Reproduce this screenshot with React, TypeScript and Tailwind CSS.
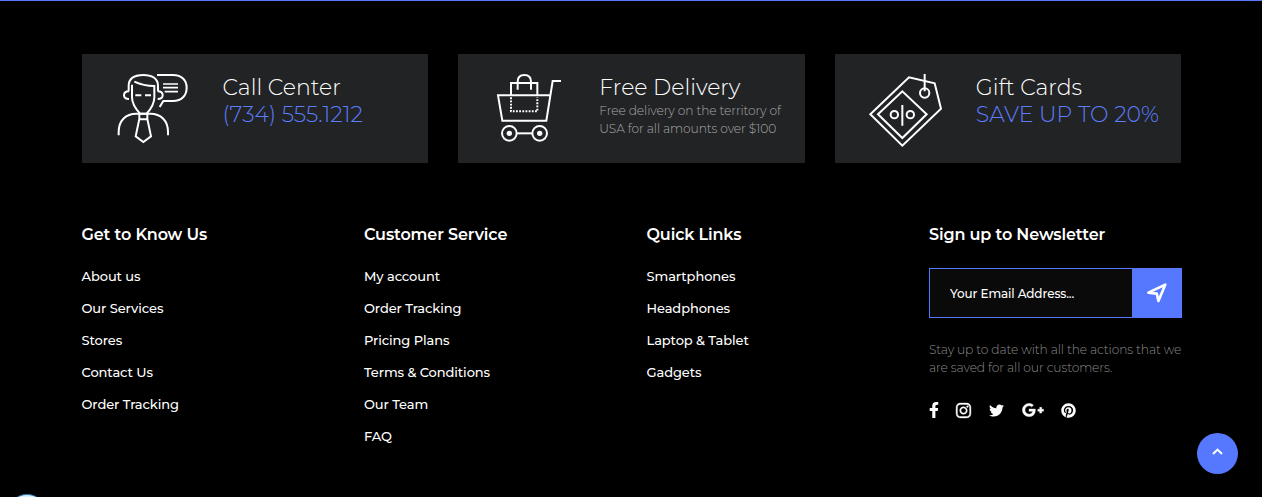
import type { ReactNode } from "react";
import { FaFacebookF, FaInstagram, FaTwitter, FaGooglePlusG, FaPinterest } from "react-icons/fa";

function AgentIcon() {
  return (
    <svg className="ml-[34.5px] h-[73px] w-[74px]" viewBox="108 66 222 219" fill="none" stroke="#fff" strokeWidth="6">
      <path d="M146 124V108C146 84 165 75 190 75S234 85 234 108V124" />
      <path d="M156 104V142C156 162 168 178 180 191H200C212 178 223 162 223 142V108C203 108 182 104 163 95" />
      <path d="M147 124C136 124 132 130 132 136S137 147 147 147M233 124C244 124 248 130 248 136S243 147 233 147" />
      <path d="M166 136H184M195 136H213" />
      <path d="M231 75H278C307 75 320 92 320 113S307 153 278 153H250L239 171" />
      <path d="M249 102H294M249 113H294M254 125H294" strokeWidth="5" />
      <path d="M116 256V246C116 211 138 191 169 191H211C242 191 264 211 264 246V256" />
      <path d="M178 191V207L167 259L190 276L213 259L202 207V191M178 208H202" />
    </svg>
  );
}

function CartIcon() {
  return (
    <svg className="ml-[36.8px] h-[71px] w-[68px]" viewBox="120 66 204 213" fill="none" stroke="#fff" strokeWidth="6">
      <path d="M318 93H293L274 212H142L129 136H287" />
      <path d="M168 136V99H247V136" />
      <path d="M188 119V95C188 81 196 75 208 75S228 81 228 95V119" />
      <path d="M168 142V184H247V142" strokeDasharray="5.5 4" />
      <circle cx="163" cy="250" r="22" />
      <circle cx="254" cy="250" r="22" />
      <circle cx="163" cy="250" r="8" fill="#fff" stroke="none" />
      <circle cx="254" cy="250" r="8" fill="#fff" stroke="none" />
      <path d="M185 250H232" />
    </svg>
  );
}

function TagIcon() {
  return (
    <svg className="ml-[33.2px] h-[76px] w-[76px]" viewBox="108 66 228 228" fill="none" stroke="#fff" strokeWidth="6">
      <path d="M115 193L231 82L308 100L327 176L211 287Z" />
      <path d="M138 193L211 124L284 193L211 264Z" />
      <path d="M211 165V227M278 72V124" />
      <circle cx="278" cy="129" r="14" />
      <circle cx="187" cy="194" r="11" />
      <circle cx="235" cy="194" r="11" />
    </svg>
  );
}

function Card({ icon, title, children }: { icon: ReactNode; title: string; children: ReactNode }) {
  return (
    <section className="flex h-[109px] bg-[#222325] pt-[18px]">
      <div className="w-[141px] shrink-0">{icon}</div>
      <div className="pt-[2px] whitespace-nowrap">
        <h2 className="text-[22px] leading-[27px] font-light text-white">{title}</h2>
        {children}
      </div>
    </section>
  );
}

function Column({ title, links }: { title: string; links: string[] }) {
  return (
    <nav className="whitespace-nowrap">
      <h3 className="text-base leading-5 font-semibold tracking-[-0.12px]">{title}</h3>
      <ul className="mt-[15px]">
        {links.map((link) => (
          <li key={link} className="h-8 text-[13px] leading-8 font-medium tracking-[-0.08px]">
            <a href="#">{link}</a>
          </li>
        ))}
      </ul>
    </nav>
  );
}

export default function App() {
  return (
    <footer className="relative h-[497px] overflow-hidden border-t border-[#5578ff] bg-black px-[81.5px] pt-[53px] font-['Montserrat','Inter',sans-serif] text-white">
      <div className="grid w-[1100px] grid-cols-3 gap-[30px]">
        <Card icon={<AgentIcon />} title="Call Center">
          <p className="text-[22px] leading-[27px] font-light tracking-[0.02px] text-[#5b7dff]">(734) 555.1212</p>
        </Card>
        <Card icon={<CartIcon />} title="Free Delivery">
          <p className="pt-px text-[12.25px] leading-[18px] font-light tracking-[-0.1px] text-[#a8a8a8]">
            Free delivery on the territory of
            <br />
            USA for all amounts over $100
          </p>
        </Card>
        <Card icon={<TagIcon />} title="Gift Cards">
          <p className="text-[22px] leading-[27px] font-light text-[#5b7dff]">SAVE UP TO 20%</p>
        </Card>
      </div>

      <div className="mt-[62px] grid w-[1100px] grid-cols-4 gap-[30px]">
        <Column
          title="Get to Know Us"
          links={["About us", "Our Services", "Stores", "Contact Us", "Order Tracking"]}
        />
        <Column
          title="Customer Service"
          links={["My account", "Order Tracking", "Pricing Plans", "Terms & Conditions", "Our Team", "FAQ"]}
        />
        <Column title="Quick Links" links={["Smartphones", "Headphones", "Laptop & Tablet", "Gadgets"]} />
        <section className="whitespace-nowrap">
          <h3 className="text-base leading-5 font-semibold tracking-[-0.12px]">Sign up to Newsletter</h3>
          <form className="mt-[23px] flex h-[50px] w-[253px]">
            <input
              type="text"
              placeholder="Your Email Address..."
              className="w-[203px] min-w-0 border border-r-0 border-[#5578ff] bg-[#0a0a0a] pt-[2px] pl-5 text-[12px] font-medium tracking-[-0.1px] outline-none placeholder:text-white"
            />
            <button type="button" aria-label="Subscribe" className="flex w-[50px] items-center justify-center bg-[#5578ff]">
              <svg className="h-5 w-5" viewBox="0 0 20 20" fill="none" stroke="#fff" strokeWidth="2.6" strokeLinejoin="round">
                <path d="M1.4 9.7L18.3 1.6L11.4 18L9.8 10.6Z" />
              </svg>
            </button>
          </form>
          <p className="mt-[23px] text-[12.25px] leading-[18px] font-light tracking-[-0.11px] text-[#8a8a8a]">
            Stay up to date with all the actions that we
            <br />
            are saved for all our customers.
          </p>
          <div className="mt-[25px] flex h-4 items-center">
            <FaFacebookF className="h-4 w-[10px]" />
            <FaInstagram className="ml-[16px] h-[17px] w-[17px]" stroke="#fff" strokeWidth="12" />
            <FaTwitter className="ml-[17px] h-[15px] w-[15px]" />
            <FaGooglePlusG className="ml-[18px] h-[22px] w-[22px]" stroke="#fff" strokeWidth="12" />
            <FaPinterest className="ml-[17px] h-[15px] w-[15px]" />
          </div>
        </section>
      </div>

      <button type="button" aria-label="Back to top" className="absolute top-[432px] left-[1197px] flex h-[41px] w-[41px] items-center justify-center rounded-full bg-[#5578ff]">
        <svg className="mb-1 h-[7px] w-[11px]" viewBox="0 0 11 7" fill="none" stroke="#fff" strokeWidth="2">
          <path d="M1 6L5.5 1.6L10 6" />
        </svg>
      </button>
      <div className="absolute top-[493px] left-[7px] h-10 w-10 rounded-full border border-[#2a77b5] bg-[#dcecf8]" />
    </footer>
  );
}
